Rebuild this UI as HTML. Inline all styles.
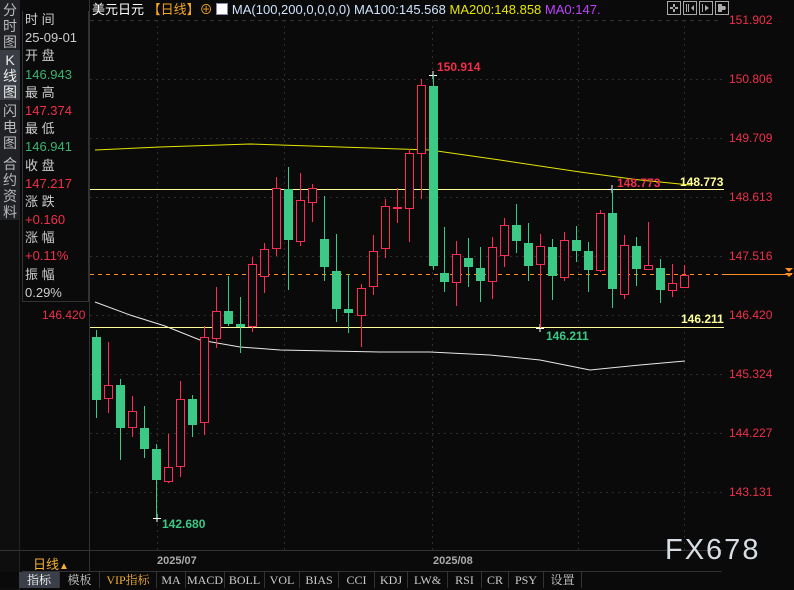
<!DOCTYPE html>
<html><head><meta charset="utf-8"><style>
*{margin:0;padding:0;box-sizing:border-box}
body{width:794px;height:588px;background:#0a0a0a;overflow:hidden;position:relative;font-family:"Liberation Sans","Noto Sans CJK SC",sans-serif;color:#ddd}
.abs{position:absolute;white-space:nowrap}
.lt{position:absolute;left:0;width:20px;background:#202226;color:#bbb;font-size:14px;line-height:16px;text-align:center}
.info{position:absolute;left:22px;top:11px;width:67px;height:291px;border:1px solid #333;border-top:none}
.info div{height:18.2px;font-size:13px;line-height:18px;padding-left:2px}
.tabs{position:absolute;top:572px;left:0;height:16px;width:794px;background:#0a0a0a;font-size:12px;line-height:16px}
.tabs span{position:absolute;top:0;height:16px;text-align:center;color:#ccc;border-right:1px solid #333;font-family:"Liberation Serif","Noto Serif CJK SC",serif}
</style></head><body>
<div class="lt" style="top:0;height:50px;padding-top:2px">分<br>时<br>图</div>
<div class="lt" style="top:50px;height:50px;background:#3a3d44;color:#eee;padding-top:2px">K<br>线<br>图</div>
<div class="lt" style="top:100px;height:52px;padding-top:3px">闪<br>电<br>图</div>
<div class="lt" style="top:152px;height:68px;padding-top:4px">合<br>约<br>资<br>料</div>
<div class="lt" style="top:220px;height:370px;background:#0e0e0e;border-right:1px solid #222"></div>
<div class="info">
<div style="color:#ccc">时 间</div><div style="color:#ccc">25-09-01</div>
<div style="color:#ccc">开 盘</div><div style="color:#3cb371">146.943</div>
<div style="color:#ccc">最 高</div><div style="color:#f0304a">147.374</div>
<div style="color:#ccc">最 低</div><div style="color:#3cb371">146.941</div>
<div style="color:#ccc">收 盘</div><div style="color:#f0304a">147.217</div>
<div style="color:#ccc">涨 跌</div><div style="color:#f0304a">+0.160</div>
<div style="color:#ccc">涨 幅</div><div style="color:#f0304a">+0.11%</div>
<div style="color:#ccc">振 幅</div><div style="color:#ccc">0.29%</div>
</div>
<div class="abs" style="left:92px;top:2px;font-size:13px;line-height:16px">
<span style="color:#fff">美元日元</span> <span style="color:#f5a623">【日线】</span><span style="color:#f5a623">⊕</span>
<span style="display:inline-block;width:12px;height:12px;background:#fff;border:1px solid #88a;vertical-align:-1px"></span>
<span style="color:#cfe3ff">MA(100,200,0,0,0,0) MA100:145.568</span>
<span style="color:#e6e600">MA200:148.858</span>
<span style="color:#c040ff">MA0:147.</span></div>
<svg class="abs" style="left:661px;top:1px" width="68" height="15">
<g fill="none" stroke="#aaa" stroke-width="1"><rect x="6.5" y=".5" width="13" height="13"/><rect x="22.5" y=".5" width="13" height="13"/><rect x="38.5" y=".5" width="13" height="13"/><rect x="54.5" y=".5" width="13" height="13"/></g>
<g fill="#aaa"><rect x="12" y="3" width="2" height="3"/><rect x="12" y="8" width="2" height="3"/><rect x="9" y="6" width="3" height="2"/><rect x="14" y="6" width="3" height="2"/><rect x="25" y="3" width="1" height="8"/><rect x="27" y="3" width="1" height="8"/><path d="M33 4l-3 3 3 3z"/><rect x="41" y="3" width="1" height="8"/><path d="M44 4l4 3-4 3z"/><rect x="57" y="3" width="4" height="8"/><path d="M61 5h3l1 2-1 2h-3z"/></g></svg>
<svg class="abs" style="left:0;top:0" width="794" height="572">
<g stroke="#2e2e2e" stroke-dasharray="2,4" stroke-width="1">
<line x1="90" y1="20.5" x2="722" y2="20.5" stroke="#333" stroke-dasharray="4,4"/>
<line x1="90" y1="79.5" x2="722" y2="79.5"/><line x1="90" y1="138.5" x2="722" y2="138.5"/><line x1="90" y1="197.5" x2="722" y2="197.5"/><line x1="90" y1="256.5" x2="722" y2="256.5"/><line x1="90" y1="315.5" x2="722" y2="315.5"/><line x1="90" y1="374.5" x2="722" y2="374.5"/><line x1="90" y1="433.5" x2="722" y2="433.5"/><line x1="90" y1="492.5" x2="722" y2="492.5"/>
<line x1="157.5" y1="20" x2="157.5" y2="550"/><line x1="284.5" y1="20" x2="284.5" y2="550"/><line x1="432.5" y1="20" x2="432.5" y2="550"/><line x1="578.5" y1="20" x2="578.5" y2="550"/><line x1="684.5" y1="20" x2="684.5" y2="550"/>
</g>
<line x1="89.5" y1="0" x2="89.5" y2="572" stroke="#333"/>
<line x1="0" y1="550.5" x2="722" y2="550.5" stroke="#333"/>
<line x1="22" y1="571.5" x2="722" y2="571.5" stroke="#333"/>
<polyline fill="none" stroke="#e6e600" stroke-width="1" points="95,150 160,147 250,144 340,147 430,150 500,160 580,172 640,180 690,185"/>
<polyline fill="none" stroke="#e8e8e8" stroke-width="1" points="95,302 130,315 165,326 200,340 240,347 280,350 330,351 380,352 430,352 490,355 540,360 590,370 640,365 685,361"/>
<line x1="90" y1="189.5" x2="724" y2="189.5" stroke="#ffff99"/>
<line x1="90" y1="327.5" x2="724" y2="327.5" stroke="#ffff99"/>
<line x1="90" y1="274.5" x2="722" y2="274.5" stroke="#ff9020" stroke-dasharray="4,4"/>
<line x1="722" y1="274.5" x2="792" y2="274.5" stroke="#ff9020"/>
<path d="M785 268h8l-4 4zM785 273h8l-4 4z" fill="#ff9020"/>
<path d="M429 75.5h8M433 71v8M536 328.5h8M540 324v8M608 189.5h8M612 185v8M153 518.5h8M157 514v8" stroke="#fff"/>
</svg>
<svg class="abs" style="left:0;top:0" width="794" height="572" id="cs"></svg>
<script>
var d=[
[96,'g',337,400,330,418],[108,'r',385,399,342,413],[120,'g',385,428,379,460],[132,'r',411,428,396,437],[144,'g',428,449,406,458],[156,'g',449,480,444,518],[168,'r',467,482,434,483],[180,'r',399,467,381,477],[192,'g',399,425,395,437],[204,'r',337,423,326,435],[216,'r',311,339,287,348],[228,'g',311,324,276,326],[240,'g',324,327,297,353],[252,'r',264,327,257,332],[264,'r',249,277,243,293],[276,'r',188,249,177,256],[288,'g',189,240,167,290],[300,'r',200,242,173,246],[312,'r',188,203,184,222],[324,'g',239,267,196,281],[336,'g',271,309,234,322],[348,'g',309,313,274,333],[361,'r',288,316,284,347],[373,'r',251,287,235,295],[385,'r',206,249,199,258],[397,'r',207,209,188,223],[409,'r',153,209,149,242],[421,'r',85,154,79,199],[433,'g',86,266,75,270],[444,'g',273,282,227,292],[456,'r',254,283,241,306],[468,'g',258,267,238,287],[480,'g',268,281,247,302],[492,'r',247,282,237,299],[504,'r',225,256,218,267],[516,'g',225,241,204,253],[528,'g',243,266,223,281],[540,'r',246,265,234,328],[552,'g',247,276,239,300],[564,'r',240,278,232,281],[576,'g',240,251,226,262],[588,'g',251,270,242,292],[600,'r',213,271,210,272],[612,'g',213,289,189,308],[624,'r',245,295,235,299],[636,'g',246,269,237,286],[648,'r',265,270,222,270],[660,'g',268,290,259,303],[672,'r',283,291,264,297],[684,'r',275,288,265,288]];
var s='';d.forEach(function(c){var x=c[0],col=c[1]=='g'?'#3cc985':'#ff2d55';
s+='<line x1="'+(x+.5)+'" y1="'+c[4]+'" x2="'+(x+.5)+'" y2="'+c[5]+'" stroke="'+col+'"/>';
var h=Math.max(2,c[3]-c[2]);
if(c[1]=='g')s+='<rect x="'+(x-4)+'" y="'+c[2]+'" width="9" height="'+h+'" fill="'+col+'"/>';
else s+='<rect x="'+(x-3.5)+'" y="'+(c[2]+.5)+'" width="8" height="'+(h-1)+'" fill="#0a0a0a" stroke="'+col+'"/>';});
document.getElementById('cs').innerHTML=s;
</script>
<div class="abs" style="left:437px;top:60px;color:#f0304a;font-size:12px;font-weight:bold">150.914</div>
<div class="abs" style="left:617px;top:176px;color:#f0304a;font-size:12px;font-weight:bold">148.773</div>
<div class="abs" style="left:680px;top:175px;color:#ffff99;font-size:12px;font-weight:bold">148.773</div>
<div class="abs" style="left:681px;top:312px;color:#ffff99;font-size:12px;font-weight:bold">146.211</div>
<div class="abs" style="left:546px;top:329px;color:#3cc985;font-size:12px;font-weight:bold">146.211</div>
<div class="abs" style="left:162px;top:517px;color:#3cc985;font-size:12px;font-weight:bold">142.680</div>
<div class="abs" style="left:42px;top:308px;color:#f0304a;font-size:12px">146.420</div>
<div class="abs" style="left:729px;top:13px;color:#f0304a;font-size:12px;line-height:14px">151.902</div>
<div class="abs" style="left:729px;top:72px;color:#f0304a;font-size:12px;line-height:14px">150.806</div>
<div class="abs" style="left:729px;top:131px;color:#f0304a;font-size:12px;line-height:14px">149.709</div>
<div class="abs" style="left:729px;top:190px;color:#f0304a;font-size:12px;line-height:14px">148.613</div>
<div class="abs" style="left:729px;top:249px;color:#f0304a;font-size:12px;line-height:14px">147.516</div>
<div class="abs" style="left:729px;top:308px;color:#f0304a;font-size:12px;line-height:14px">146.420</div>
<div class="abs" style="left:729px;top:367px;color:#f0304a;font-size:12px;line-height:14px">145.324</div>
<div class="abs" style="left:729px;top:426px;color:#f0304a;font-size:12px;line-height:14px">144.227</div>
<div class="abs" style="left:729px;top:485px;color:#f0304a;font-size:12px;line-height:14px">143.131</div>
<div class="abs" style="left:33px;top:554px;color:#f5b030;font-size:13px">日线<span style="font-size:10px">▲</span></div>
<div class="abs" style="left:157px;top:555px;color:#aaa;font-size:11px;font-weight:bold">2025/07</div>
<div class="abs" style="left:433px;top:555px;color:#aaa;font-size:11px;font-weight:bold">2025/08</div>
<div class="abs" style="left:665px;top:534px;color:#d8dde4;font-size:29px;letter-spacing:2px">FX678</div>
<div class="tabs">
<span style="left:19px;width:41px;background:#3a3f4a;color:#fff">指标</span>
<span style="left:60px;width:40px">模板</span>
<span style="left:100px;width:57px;color:#f5b030">VIP指标</span>
<span style="left:157px;width:29px">MA</span>
<span style="left:186px;width:39px">MACD</span>
<span style="left:225px;width:40px">BOLL</span>
<span style="left:265px;width:35px">VOL</span>
<span style="left:300px;width:39px">BIAS</span>
<span style="left:339px;width:36px">CCI</span>
<span style="left:375px;width:33px">KDJ</span>
<span style="left:408px;width:40px">LW&amp;</span>
<span style="left:448px;width:34px">RSI</span>
<span style="left:482px;width:27px">CR</span>
<span style="left:509px;width:35px">PSY</span>
<span style="left:544px;width:38px">设置</span>
</div>
</body></html>
